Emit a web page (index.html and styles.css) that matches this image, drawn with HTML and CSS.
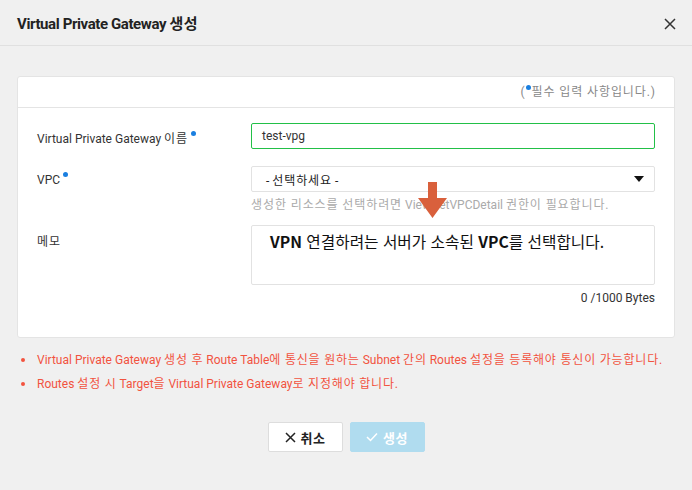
FILE: index.html
```html
<!DOCTYPE html>
<html lang="ko">
<head>
<meta charset="utf-8">
<title>Virtual Private Gateway 생성</title>
<link rel="stylesheet" href="styles.css">
</head>
<body>
<div class="modal">
  <div class="header">
    <h1 class="title">Virtual Private Gateway <span class="ko">생성</span></h1>
    <button class="close" aria-label="닫기">
      <svg width="12" height="12" viewBox="0 0 12 12"><path d="M1 1L11 11M11 1L1 11" stroke="#333" stroke-width="1.5" fill="none"/></svg>
    </button>
  </div>
  <div class="content">
    <div class="card">
      <div class="card-head">(<span class="dot"></span><span class="ko">필수 입력 사항입니다.</span>)</div>
      <div class="form">
        <div class="row">
          <div class="label">Virtual Private Gateway <span class="ko">이름</span><span class="dot sup"></span></div>
          <div class="field">
            <div class="input active">test-vpg</div>
          </div>
        </div>
        <div class="row">
          <div class="label">VPC<span class="dot sup"></span></div>
          <div class="field">
            <div class="select">
              <span>- <span class="ko">선택하세요</span> -</span>
              <svg width="10" height="6" viewBox="0 0 10 6"><path d="M0 0H10L5 6Z" fill="#111"/></svg>
            </div>
            <div class="help"><span class="ko">생성한 리소스를 선택하려면</span> ViewGetVPCDetail <span class="ko">권한이 필요합니다.</span></div>
          </div>
        </div>
        <div class="row memo">
          <div class="label"><span class="ko">메모</span></div>
          <div class="field">
            <div class="textarea"><b>VPN</b> 연결하려는 서버가 소속된 <b>VPC</b>를 선택합니다.</div>
            <div class="count">0 /1000 Bytes</div>
          </div>
        </div>
      </div>
    </div>
    <ul class="notes">
      <li>Virtual Private Gateway <span class="ko">생성 후</span> Route Table<span class="ko">에 통신을 원하는</span> Subnet <span class="ko">간의</span> Routes <span class="ko">설정을 등록해야 통신이 가능합니다.</span></li>
      <li>Routes <span class="ko">설정 시</span> Target<span class="ko">을</span> Virtual Private Gateway<span class="ko">로 지정해야 합니다.</span></li>
    </ul>
    <div class="buttons">
      <button class="btn cancel"><svg width="11" height="11" viewBox="0 0 11 11"><path d="M1 1L10 10M10 1L1 10" stroke="#222" stroke-width="1.5" fill="none"/></svg><span class="ko">취소</span></button>
      <button class="btn create" disabled><svg width="12" height="10" viewBox="0 0 12 10"><path d="M1 5L4.5 8.5L11 1.5" stroke="#fff" stroke-width="1.5" fill="none"/></svg><span class="ko">생성</span></button>
    </div>
  </div>
  <svg class="arrow" width="30" height="37" viewBox="0 0 30 37"><path d="M10 0H19V16H29L14.5 36L0 16H10Z" fill="#d9603c"/></svg>
</div>
</body>
</html>
```

FILE: styles.css
```css
* { box-sizing: border-box; }
html, body { margin: 0; padding: 0; }
body {
  background: #f0f0f0;
  font-family: Roboto, "Noto Sans CJK KR", sans-serif;
  color: #333;
  width: 692px;
  height: 490px;
  overflow: hidden;
}
.ko { letter-spacing: 0.9px; }
.notes .ko { letter-spacing: 0.8px; }
.modal { position: relative; height: 490px; }
.header {
  height: 46px;
  border-bottom: 1px solid #e0e0e0;
  display: flex;
  align-items: center;
  justify-content: space-between;
  padding: 0 16px 0 17px;
}
.title {
  margin: 0;
  font-size: 15px;
  font-weight: 700;
  color: #222;
  letter-spacing: -0.4px;
  padding-bottom: 1px;
}
.title .ko { letter-spacing: 0.5px; }
.close {
  border: 0;
  background: none;
  padding: 0;
  width: 12px;
  height: 12px;
  display: flex;
  margin-top: 2px;
}
.content { padding: 30px 17px 0; }
.card {
  background: #fff;
  border: 1px solid #e4e4e4;
  border-radius: 3px;
  height: 262px;
}
.card-head {
  height: 31px;
  border-bottom: 1px solid #e4e4e4;
  text-align: right;
  padding: 5px 19px 0 0;
  font-size: 12px;
  color: #888;
}
.dot {
  display: inline-block;
  width: 5px;
  height: 5px;
  border-radius: 50%;
  background: #1a7fe0;
  vertical-align: 6px;
  margin: 0 1px;
}
.dot.sup { margin-left: 3px; vertical-align: 7px; }
.form { padding: 15px 19px 0; }
.row {
  display: grid;
  grid-template-columns: 214px 1fr;
  margin-bottom: 17px;
}
.row:nth-child(2) { margin-bottom: 13px; }
.label {
  font-size: 12px;
  color: #333;
  padding-top: 6px;
}
.memo .label { padding-top: 7px; }
.input, .select, .textarea {
  border: 1px solid #e2e2e2;
  border-radius: 2px;
  height: 26px;
  font-size: 12px;
}
.input {
  padding: 5px 10px;
  color: #333;
}
.input.active { border-color: #22c047; }
.select {
  display: flex;
  align-items: center;
  justify-content: space-between;
  padding: 0 10px 0 14px;
  color: #222;
}
.help {
  font-size: 12px;
  color: #aaa;
  padding-top: 3px;
}
.textarea {
  height: 60px;
  padding: 5px 18px;
  font-family: "Noto Sans CJK KR", sans-serif;
  font-size: 15.7px;
  color: #111;
  line-height: 22px;
}
.textarea b { font-weight: 700; }
.count {
  text-align: right;
  font-size: 12px;
  color: #333;
  padding-top: 6px;
}
.notes {
  margin: 10px 0 0;
  padding: 0 0 0 20px;
  list-style: none;
  font-size: 12px;
  color: #f2533f;
}
.notes li {
  position: relative;
  line-height: 24px;
}
.notes li::before {
  content: "";
  position: absolute;
  left: -16px;
  top: 10px;
  width: 4px;
  height: 4px;
  border-radius: 50%;
  background: #f2533f;
}
.buttons {
  display: flex;
  justify-content: center;
  gap: 7px;
  margin-top: 26px;
}
.btn {
  width: 75px;
  height: 30px;
  border-radius: 2px;
  font-family: Roboto, "Noto Sans CJK KR", sans-serif;
  font-size: 13px;
  font-weight: 700;
  display: flex;
  align-items: center;
  justify-content: center;
  gap: 5px;
}
.btn .ko { letter-spacing: 0.5px; }
.cancel { background: #fff; border: 1px solid #ddd; color: #222; }
.create { background: #b0dcef; border: 1px solid #b0dcef; color: #fff; }
.arrow { position: absolute; left: 418px; top: 182px; }
```
